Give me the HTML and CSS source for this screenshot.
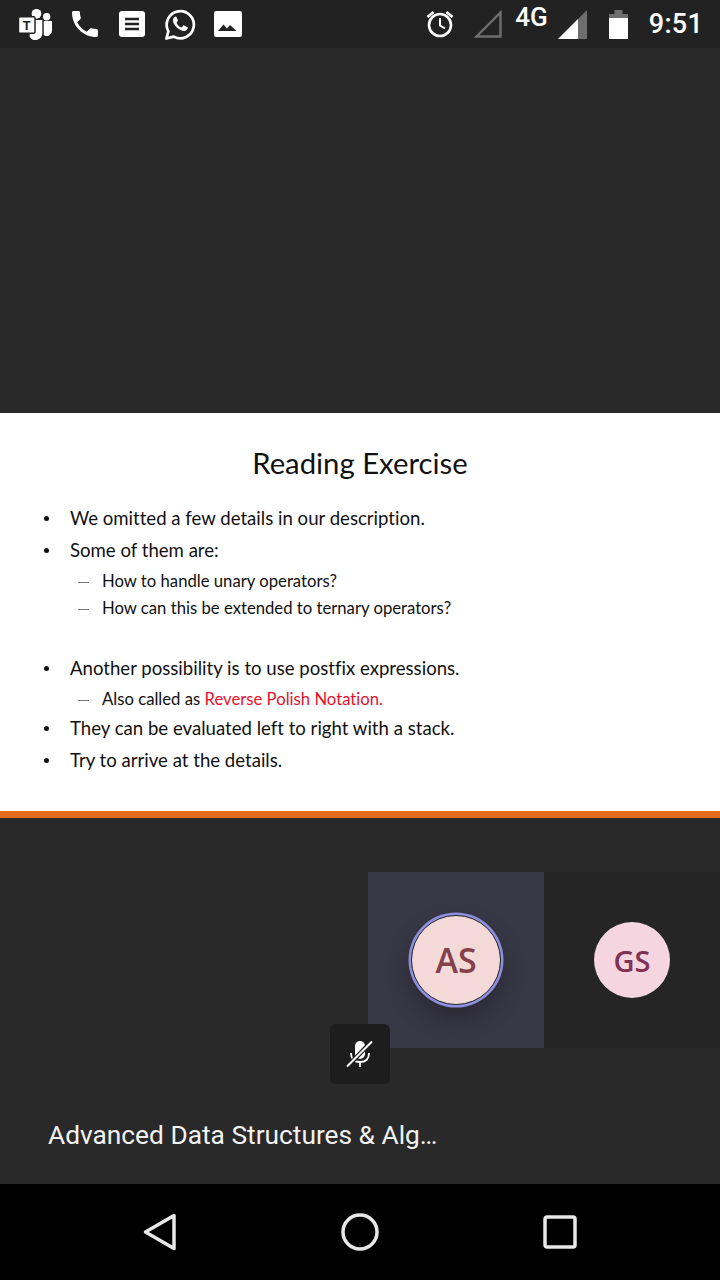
FILE: index.html
```html
<!DOCTYPE html>
<html lang="en">
<head>
    <meta charset="UTF-8">
    <meta name="viewport" content="width=device-width, initial-scale=1.0">
    <title>Meeting</title>
    <link rel="stylesheet" href="styles.css">
</head>
<body>
    <header class="status-bar">
        <div class="status-left">
            <svg class="icon-teams" width="35" height="34" viewBox="0 0 36 34">
                <circle cx="19" cy="6.500" r="5" fill="#fff"/>
                <circle cx="29.500" cy="9.500" r="3.800" fill="#fff"/>
                <path d="M12 13h13v13a7 7 0 0 1-13 4z" fill="#fff"/>
                <path d="M26.500 14h8.500v10a5.500 5.500 0 0 1-8.500 4.500z" fill="#fff"/>
                <rect x="0.500" y="9.500" width="17" height="17" rx="1.500" fill="#fff" stroke="#222" stroke-width="1.500"/>
                <text x="9" y="23" class="teams-t">T</text>
            </svg>
            <svg class="icon-phone" width="26" height="26" viewBox="3 3 18 18"><path fill="#fff" d="M6.620 10.790c1.440 2.830 3.760 5.140 6.590 6.590l2.200-2.200c.27-.27.670-.36 1.020-.24 1.120.37 2.330.57 3.570.57.550 0 1 .45 1 1V20c0 .55-.45 1-1 1C10.610 21 3 13.390 3 4c0-.55.45-1 1-1h3.500c.55 0 1 .45 1 1 0 1.250.2 2.450.57 3.570.11.350.03.740-.25 1.020z"/></svg>
            <svg width="26" height="26" viewBox="0 0 26 26">
                <rect width="26" height="26" rx="3" fill="#fff"/>
                <path d="M6 8h14M6 13h14M6 18h14" stroke="#222" stroke-width="2.400"/>
            </svg>
            <svg width="32" height="33" viewBox="0 0 33 33">
                <path d="M2.500 31l2-7.500a14 14 0 1 1 5.500 5.500z" fill="none" stroke="#fff" stroke-width="2.800" stroke-linejoin="round"/>
                <path fill="#fff" d="M11.500 8.500c-1 .4-2.300 1.800-2.300 3.700 0 4.300 6.400 11 11.500 11 2 0 3.700-1.400 3.900-3 .1-.6-.1-1-.6-1.200l-3.200-1.500c-.5-.2-.8-.1-1.100.3l-1.100 1.400c-.3.300-.6.300-1 .2-2-.9-3.500-2.400-4.500-4.300-.2-.4-.1-.7.200-1l.9-1.100c.2-.3.300-.6.100-1l-1.300-3c-.3-.6-.6-.7-1.300-.6z"/>
            </svg>
            <svg class="icon-image" width="28" height="26" viewBox="0 0 28 26">
                <rect width="28" height="26" rx="2" fill="#fff"/>
                <path d="M4 20l5.500-6.500 3.500 4 3-3.500 6.500 6z" fill="#222"/>
            </svg>
        </div>
        <div class="status-right">
            <svg class="icon-alarm" width="30" height="30" viewBox="0 0 30 30">
                <circle cx="15" cy="16" r="11" fill="none" stroke="#fff" stroke-width="2.600"/>
                <path d="M15 9v7.500l5 3" fill="none" stroke="#fff" stroke-width="2"/>
                <path d="M2.500 8l6-5M27.500 8l-6-5" stroke="#fff" stroke-width="2.800"/>
            </svg>
            <svg class="icon-empty-signal" width="28" height="28" viewBox="0 0 28 28">
                <path d="M2.500 26.500l24-24v24z" fill="none" stroke="#6e6e6e" stroke-width="2.400"/>
            </svg>
            <span class="net-type">4G</span>
            <svg class="icon-signal" width="29" height="29" viewBox="0 0 29 29">
                <path d="M0 29L29 0v29z" fill="#6e6e6e"/>
                <path d="M0 29l20-20v20z" fill="#fff"/>
            </svg>
            <svg class="icon-battery" width="19" height="29" viewBox="0 0 19 29">
                <path d="M0 4h5.500V0h8v4H19v7H0z" fill="#6e6e6e"/>
                <rect y="8" width="19" height="21" fill="#fff"/>
            </svg>
            <span class="clock">9:51</span>
        </div>
    </header>

    <main class="stage">
        <div class="stage-top"></div>
        <section class="slide">
            <h1>Reading Exercise</h1>
            <ul class="points">
                <li>We omitted a few details in our description.</li>
                <li>Some of them are:
                    <ul class="sub">
                        <li>How to handle unary operators?</li>
                        <li>How can this be extended to ternary operators?</li>
                    </ul>
                </li>
                <li class="gap">Another possibility is to use postfix expressions.
                    <ul class="sub">
                        <li>Also called as <span class="red">Reverse Polish Notation.</span></li>
                    </ul>
                </li>
                <li>They can be evaluated left to right with a stack.</li>
                <li>Try to arrive at the details.</li>
            </ul>
        </section>
        <div class="slide-line"></div>
        <section class="call">
            <div class="tiles">
                <div class="tile active">
                    <div class="avatar as">AS</div>
                </div>
                <div class="tile">
                    <div class="avatar gs">GS</div>
                </div>
            </div>
            <div class="mute">
                <svg width="30" height="30" viewBox="0 0 30 30">
                    <rect x="10" y="2" width="10" height="18" rx="5" fill="#fff"/>
                    <path d="M6 14c0 6 3 9 9 9s9-3 9-9M15 23v5" fill="none" stroke="#fff" stroke-width="1.800"/>
                    <path d="M26 3L4 26" stroke="#1d1d1d" stroke-width="4.500"/>
                    <path d="M27 2.500L2 27.500" stroke="#fff" stroke-width="2"/>
                </svg>
            </div>
            <p class="meeting-name">Advanced Data Structures &amp; Alg…</p>
        </section>
    </main>

    <footer class="nav-bar">
        <svg width="34" height="38" viewBox="0 0 34 38"><path d="M31 2.500L2.500 19 31 35.500z" fill="none" stroke="#e8e8e8" stroke-width="3.500" stroke-linejoin="round"/></svg>
        <svg width="38" height="38" viewBox="0 0 38 38"><circle cx="19" cy="19" r="17" fill="none" stroke="#e8e8e8" stroke-width="3.500"/></svg>
        <svg width="34" height="34" viewBox="0 0 34 34"><rect x="2" y="2" width="30" height="30" rx="2" fill="none" stroke="#e8e8e8" stroke-width="3.500"/></svg>
    </footer>
</body>
</html>
```

FILE: styles.css
```css
body {
    margin: 0;
    padding: 0;
    width: 720px;
    height: 1280px;
    overflow: hidden;
    display: flex;
    flex-direction: column;
    background: #292929;
    font-family: Roboto, sans-serif;
}
.status-bar {
    height: 48px;
    flex: none;
    background: #222;
    display: flex;
    justify-content: space-between;
    align-items: center;
    padding: 0 17px 0 18px;
    color: #fff;
}
.status-left {
    display: flex;
    align-items: center;
    gap: 19px;
}
.icon-phone {
    margin-right: 2px;
}
.icon-image {
    margin-left: -1px;
}
.status-right {
    display: flex;
    align-items: center;
}
.teams-t {
    font-family: Roboto, sans-serif;
    font-size: 13px;
    font-weight: 700;
    text-anchor: middle;
    fill: #222;
}
.icon-empty-signal {
    margin-left: 19px;
}
.net-type {
    font-size: 26px;
    font-weight: 500;
    margin: 0 10px 14px 13px;
}
.icon-battery {
    margin-left: 22px;
}
.clock {
    font-size: 27px;
    font-weight: 500;
    margin-left: 21px;
    letter-spacing: 0.250px;
}
.stage {
    flex: 1;
    display: flex;
    flex-direction: column;
    background: #292929;
}
.stage-top {
    height: 365px;
}
.slide {
    height: 398px;
    box-sizing: border-box;
    background: #fff;
    padding-top: 32px;
    font-family: Lato, sans-serif;
    font-variant-ligatures: none;
    color: #111;
}
.slide h1 {
    margin: 0;
    font-size: 29.300px;
    line-height: 36px;
    font-weight: 400;
    text-align: center;
}
.points {
    list-style: none;
    margin: 25px 0 0;
    padding: 0 0 0 70px;
    font-size: 18.600px;
    line-height: 24px;
}
.points > li {
    position: relative;
    margin-bottom: 8px;
}
.points > li::before {
    content: "";
    position: absolute;
    left: -26px;
    top: 10px;
    width: 5px;
    height: 5px;
    border-radius: 50%;
    background: #111;
}
.points > li.gap {
    margin-top: 34px;
    margin-bottom: 3px;
}
.sub {
    list-style: none;
    margin: 6px 0 0;
    padding: 0 0 0 32px;
    font-size: 16.700px;
    line-height: 27px;
}
.sub li {
    position: relative;
}
.sub li::before {
    content: "";
    position: absolute;
    left: -24px;
    top: 14px;
    width: 11px;
    height: 1px;
    background: #777;
}
.red {
    color: #e8112d;
}
.slide-line {
    height: 7px;
    background: #e36c1c;
}
.call {
    flex: 1;
    position: relative;
}
.tiles {
    display: flex;
    justify-content: flex-end;
    padding-top: 54px;
}
.tile {
    width: 176px;
    height: 176px;
    background: #252525;
    display: flex;
    align-items: center;
    justify-content: center;
}
.tile.active {
    background: #383745;
}
.avatar {
    border-radius: 50%;
    display: flex;
    align-items: center;
    justify-content: center;
    font-family: "Open Sans", sans-serif;
    font-weight: 600;
}
.avatar.as {
    width: 88px;
    height: 88px;
    background: #f3dad9;
    color: #84404b;
    font-size: 34px;
    line-height: 86px;
    border: 1.500px solid #222;
    box-shadow: 0 0 0 2.500px #8b8fde, 0 12px 24px rgba(0, 0, 0, 0.3);
}
.avatar.gs {
    width: 76px;
    height: 76px;
    background: #f5d5e0;
    color: #7f3354;
    font-size: 29px;
}
.mute {
    position: absolute;
    left: 330px;
    top: 206px;
    width: 60px;
    height: 60px;
    background: #1d1d1d;
    border-radius: 6px;
    display: flex;
    align-items: center;
    justify-content: center;
}
.meeting-name {
    margin: 70px 0 0 48px;
    color: #f2f2f2;
    font-size: 26.300px;
    line-height: 34px;
}
.nav-bar {
    height: 96px;
    flex: none;
    background: #000;
    display: flex;
    align-items: center;
    justify-content: space-between;
    box-sizing: border-box;
    padding-left: 143px;
    padding-right: 143px;
}
```
